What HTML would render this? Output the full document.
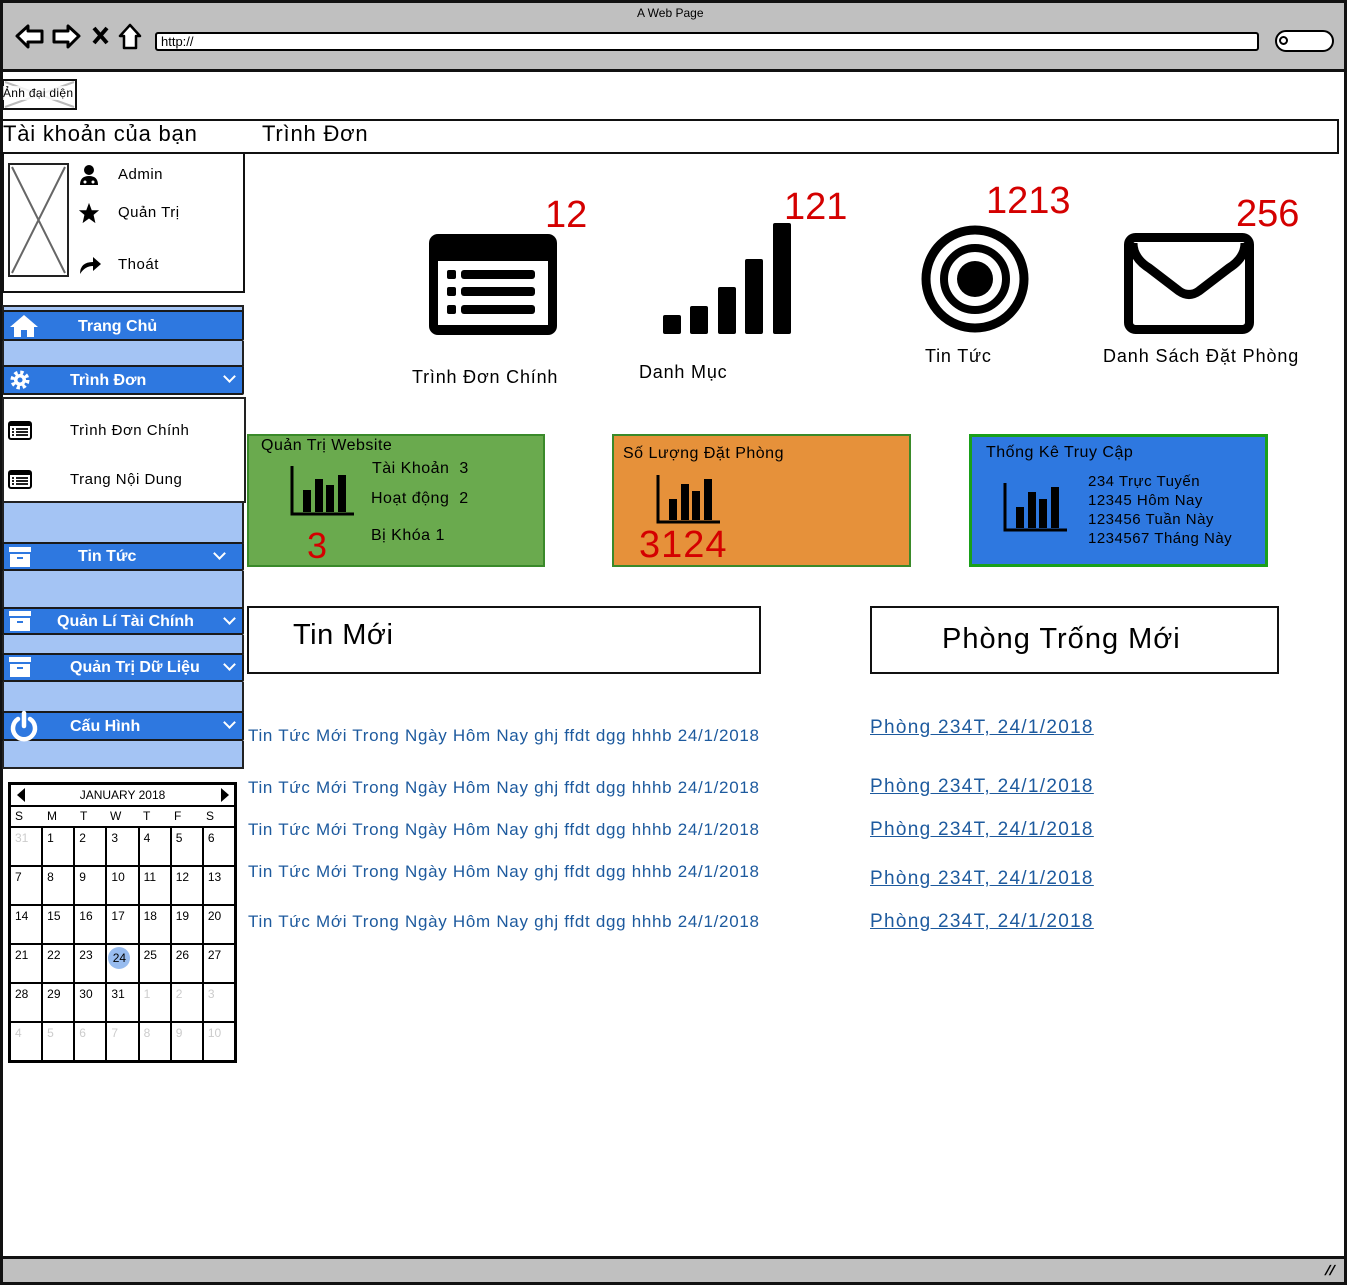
<!DOCTYPE html>
<html><head><meta charset="utf-8">
<style>
*{margin:0;padding:0;box-sizing:border-box}
body{width:1347px;height:1285px;position:relative;background:#fff;font-family:"Liberation Sans","DejaVu Sans",sans-serif;overflow:hidden;color:#000;letter-spacing:0.5px}
.a{position:absolute}
.bar{position:absolute;left:2px;width:242px;background:#2e78e0;border:2px solid #1a1a1a;border-radius:2px;color:#fff;font-weight:bold;font-size:16px;letter-spacing:0}
.lt{position:absolute;left:2px;width:242px;background:#a4c4f4;border-left:2px solid #222;border-right:2px solid #222}
.chev{position:absolute;right:8px;top:5px;width:9px;height:9px;border-right:2px solid #fff;border-bottom:2px solid #fff;transform:rotate(45deg)}
.red{color:#d40000;font-size:38px;letter-spacing:0}
.lk{position:absolute;left:248px;color:#1d5a9e;font-size:17px;letter-spacing:0.7px}
.rk{position:absolute;left:870px;color:#1d5a9e;font-size:19px;text-decoration:underline;letter-spacing:1.3px}
table.cal{border-collapse:collapse}
.cal td{border:2px solid #000;width:31px;height:39px;vertical-align:top;font-size:12px;padding:3px 0 0 4px;letter-spacing:0}
.g{color:#ccc}
</style></head><body>
<div class="a" style="left:0;top:0;width:1347px;height:1285px;border:3px solid #111;"></div>
<div class="a" style="left:3px;top:3px;width:1341px;height:69px;background:#c0c0c0;border-bottom:3px solid #111"></div>
<div class="a" style="left:637px;top:6px;font-size:12px;letter-spacing:0">A Web Page</div>
<svg class="a" style="left:14px;top:22px" width="135" height="30" viewBox="0 0 135 30">
<path d="M3 14 L14 4 L14 9 L28 9 L28 20 L14 20 L14 25 Z" fill="#fff" stroke="#000" stroke-width="3" stroke-linejoin="round"/>
<path d="M65 14 L54 4 L54 9 L40 9 L40 20 L54 20 L54 25 Z" fill="#fff" stroke="#000" stroke-width="3" stroke-linejoin="round"/>
<path d="M80 6 L93 21 M93 6 L80 21" stroke="#000" stroke-width="4"/>
<path d="M116 3 L106 14 L110 14 L110 26 L122 26 L122 14 L126 14 Z" fill="#fff" stroke="#000" stroke-width="2.5" stroke-linejoin="round"/>
</svg>
<div class="a" style="left:155px;top:32px;width:1104px;height:19px;background:#fff;border:2px solid #000;border-radius:3px;font-size:13px;padding-left:4px;line-height:15px;letter-spacing:0">http://</div>
<div class="a" style="left:1275px;top:30px;width:59px;height:22px;background:#fff;border:2px solid #000;border-radius:12px"></div>
<div class="a" style="left:1279px;top:36px;width:9px;height:9px;border:2px solid #000;border-radius:50%"></div>
<div class="a" style="left:3px;top:1256px;width:1341px;height:26px;background:#c0c0c0;border-top:3px solid #111"></div>
<div class="a" style="left:1326px;top:1262px;font-size:14px;font-weight:bold;transform:skewX(-20deg)">//</div>

<div class="a" style="left:2px;top:79px;width:75px;height:31px;border:2px solid #111;background:#fff"></div>
<svg class="a" style="left:3px;top:80px" width="73" height="29"><path d="M2 2 L71 27 M71 2 L2 27" stroke="#bbb" stroke-width="2"/></svg>
<div class="a" style="left:3px;top:86px;font-size:12px;letter-spacing:0.3px;background:rgba(255,255,255,.8)">Ảnh đại diện</div>

<div class="a" style="left:0;top:119px;width:1339px;height:35px;border:2px solid #111"></div>
<div class="a" style="left:3px;top:121px;font-size:22px;letter-spacing:0.8px">Tài khoản của bạn</div>
<div class="a" style="left:262px;top:121px;font-size:22px;letter-spacing:0.8px">Trình Đơn</div>

<div class="a" style="left:2px;top:153px;width:243px;height:140px;border:2px solid #111;border-top:none"></div>
<div class="a" style="left:8px;top:163px;width:61px;height:114px;border:2px solid #222"></div>
<svg class="a" style="left:10px;top:165px" width="57" height="110"><path d="M2 2 L55 108 M55 2 L2 108" stroke="#666" stroke-width="2"/></svg>
<svg class="a" style="left:78px;top:164px" width="22" height="22" viewBox="0 0 22 22"><circle cx="11" cy="6" r="5"/><path d="M2 21 Q2 12 11 12 Q20 12 20 21 Z"/><circle cx="7" cy="18" r="1.5" fill="#fff"/><circle cx="15" cy="18" r="1.5" fill="#fff"/></svg>
<div class="a" style="left:118px;top:166px;font-size:15px">Admin</div>
<svg class="a" style="left:78px;top:202px" width="22" height="22" viewBox="0 0 24 24"><path d="M12 1 L15 9 L23 9 L17 14 L19 23 L12 18 L5 23 L7 14 L1 9 L9 9 Z"/></svg>
<div class="a" style="left:118px;top:204px;font-size:15px">Quản Trị</div>
<svg class="a" style="left:77px;top:253px" width="26" height="22" viewBox="0 0 26 22"><path d="M3 21 Q3 9 16 9 L16 4 L24 11 L16 18 L16 13 Q8 13 3 21 Z"/></svg>
<div class="a" style="left:118px;top:256px;font-size:15px">Thoát</div>

<div class="lt" style="top:305px;height:8px;border-top:2px solid #222"></div>
<div class="bar" style="top:310px;height:31px"><span class="a" style="left:74px;top:6px">Trang Chủ</span></div>
<svg class="a" style="left:8px;top:313px" width="32" height="25" viewBox="0 0 32 25"><path d="M16 2 L2 14 L6 14 L6 24 L13 24 L13 17 L19 17 L19 24 L26 24 L26 14 L30 14 Z" fill="#fff"/></svg>
<div class="lt" style="top:341px;height:25px"></div>
<div class="bar" style="top:365px;height:30px"><span class="a" style="left:66px;top:5px">Trình Đơn</span><span class="chev"></span></div>
<svg class="a" style="left:9px;top:369px" width="22" height="22" viewBox="0 0 22 22"><circle cx="11" cy="11" r="7" fill="none" stroke="#fff" stroke-width="5" stroke-dasharray="3 2.5"/><circle cx="11" cy="11" r="6" fill="#fff"/><circle cx="11" cy="11" r="2.5" fill="#2e78e0"/></svg>
<div class="a" style="left:2px;top:397px;width:244px;height:106px;border:2px solid #222;background:#fff"></div>
<svg class="a" style="left:8px;top:421px" width="24" height="19" viewBox="0 0 24 19"><rect x="1" y="1" width="22" height="17" rx="2" fill="#fff" stroke="#000" stroke-width="2"/><rect x="1" y="1" width="22" height="4" fill="#000"/><path d="M4 8h2M4 11h2M4 14h2M8 8h12M8 11h12M8 14h12" stroke="#000" stroke-width="1.7"/></svg>
<div class="a" style="left:70px;top:422px;font-size:15px">Trình Đơn Chính</div>
<svg class="a" style="left:8px;top:470px" width="24" height="19" viewBox="0 0 24 19"><rect x="1" y="1" width="22" height="17" rx="2" fill="#fff" stroke="#000" stroke-width="2"/><rect x="1" y="1" width="22" height="4" fill="#000"/><path d="M4 8h2M4 11h2M4 14h2M8 8h12M8 11h12M8 14h12" stroke="#000" stroke-width="1.7"/></svg>
<div class="a" style="left:70px;top:471px;font-size:15px">Trang Nội Dung</div>
<div class="lt" style="top:503px;height:40px"></div>
<div class="bar" style="top:542px;height:29px"><span class="a" style="left:74px;top:4px">Tin Tức</span><span class="chev" style="right:18px"></span></div>
<div class="lt" style="top:571px;height:37px"></div>
<div class="bar" style="top:607px;height:28px"><span class="a" style="left:53px;top:4px">Quản Lí Tài Chính</span><span class="chev"></span></div>
<div class="lt" style="top:635px;height:19px"></div>
<div class="bar" style="top:653px;height:29px"><span class="a" style="left:66px;top:4px">Quản Trị Dữ Liệu</span><span class="chev"></span></div>
<div class="lt" style="top:682px;height:30px"></div>
<div class="bar" style="top:711px;height:30px"><span class="a" style="left:66px;top:5px">Cấu Hình</span><span class="chev"></span></div>
<div class="lt" style="top:741px;height:28px;border-bottom:2px solid #222"></div>
<svg class="a" style="left:8px;top:546px" width="24" height="22"><rect x="1" y="1" width="22" height="5" fill="#fff"/><rect x="2" y="8" width="20" height="13" fill="#fff"/><rect x="9" y="11" width="6" height="2" fill="#2e78e0"/></svg>
<svg class="a" style="left:8px;top:610px" width="24" height="22"><rect x="1" y="1" width="22" height="5" fill="#fff"/><rect x="2" y="8" width="20" height="13" fill="#fff"/><rect x="9" y="11" width="6" height="2" fill="#2e78e0"/></svg>
<svg class="a" style="left:8px;top:656px" width="24" height="22"><rect x="1" y="1" width="22" height="5" fill="#fff"/><rect x="2" y="8" width="20" height="13" fill="#fff"/><rect x="9" y="11" width="6" height="2" fill="#2e78e0"/></svg>
<svg class="a" style="left:9px;top:710px" width="30" height="32" viewBox="0 0 30 32"><path d="M9 9 A11 11 0 1 0 21 9" fill="none" stroke="#fff" stroke-width="4.5" stroke-linecap="round"/><path d="M15 3 L15 16" stroke="#fff" stroke-width="4.5" stroke-linecap="round"/></svg>

<div class="a" style="left:8px;top:782px;width:229px;height:281px;border:3px solid #000;background:#fff"></div>
<div class="a" style="left:11px;top:785px;width:223px;height:22px;border-bottom:2px solid #000;font-size:12px;text-align:center;line-height:20px;letter-spacing:0">JANUARY 2018</div>
<div class="a" style="left:17px;top:788px;width:0;height:0;border-top:7px solid transparent;border-bottom:7px solid transparent;border-right:8px solid #000"></div>
<div class="a" style="left:221px;top:788px;width:0;height:0;border-top:7px solid transparent;border-bottom:7px solid transparent;border-left:8px solid #000"></div>
<div class="a" style="left:11px;top:809px;width:223px;height:18px;font-size:12px;display:flex;letter-spacing:0"><span style="width:31px;padding-left:4px">S</span><span style="width:31px;padding-left:5px">M</span><span style="width:31px;padding-left:7px">T</span><span style="width:31px;padding-left:6px">W</span><span style="width:31px;padding-left:8px">T</span><span style="width:31px;padding-left:8px">F</span><span style="width:31px;padding-left:9px">S</span></div>
<table class="cal a" style="left:9px;top:826px;width:227px">
<tr><td class="g">31</td><td>1</td><td>2</td><td>3</td><td>4</td><td>5</td><td>6</td></tr>
<tr><td>7</td><td>8</td><td>9</td><td>10</td><td>11</td><td>12</td><td>13</td></tr>
<tr><td>14</td><td>15</td><td>16</td><td>17</td><td>18</td><td>19</td><td>20</td></tr>
<tr><td>21</td><td>22</td><td>23</td><td style="padding:2px 0 0 1px"><span style="display:inline-block;width:22px;height:22px;border-radius:50%;background:#98bcef;text-align:center;line-height:22px">24</span></td><td>25</td><td>26</td><td>27</td></tr>
<tr><td>28</td><td>29</td><td>30</td><td>31</td><td class="g">1</td><td class="g">2</td><td class="g">3</td></tr>
<tr><td class="g">4</td><td class="g">5</td><td class="g">6</td><td class="g">7</td><td class="g">8</td><td class="g">9</td><td class="g">10</td></tr>
</table>

<svg class="a" style="left:429px;top:234px" width="128" height="101" viewBox="0 0 128 101"><rect x="0" y="0" width="128" height="101" rx="9"/><rect x="9" y="27" width="110" height="64" fill="#fff"/><rect x="18" y="36" width="9" height="9" rx="2"/><rect x="18" y="53" width="9" height="9" rx="2"/><rect x="18" y="71" width="9" height="9" rx="2"/><rect x="32" y="36" width="74" height="9" rx="3"/><rect x="32" y="53" width="74" height="9" rx="3"/><rect x="32" y="71" width="74" height="9" rx="3"/></svg>
<div class="a red" style="left:545px;top:194px">12</div>
<div class="a" style="left:412px;top:367px;font-size:18px;letter-spacing:0.8px">Trình Đơn Chính</div>
<svg class="a" style="left:663px;top:223px" width="129" height="111"><rect x="0" y="92" width="18" height="19" rx="2"/><rect x="27" y="83" width="18" height="28" rx="2"/><rect x="55" y="64" width="18" height="47" rx="2"/><rect x="82" y="36" width="18" height="75" rx="2"/><rect x="110" y="0" width="18" height="111" rx="2"/></svg>
<div class="a red" style="left:784px;top:186px">121</div>
<div class="a" style="left:639px;top:362px;font-size:18px;letter-spacing:0.8px">Danh Mục</div>
<svg class="a" style="left:920px;top:224px" width="110" height="110"><circle cx="55" cy="55" r="49" fill="none" stroke="#000" stroke-width="9"/><circle cx="55" cy="55" r="31" fill="none" stroke="#000" stroke-width="8"/><circle cx="55" cy="55" r="18"/></svg>
<div class="a red" style="left:986px;top:180px">1213</div>
<div class="a" style="left:925px;top:346px;font-size:18px;letter-spacing:0.8px">Tin Tức</div>
<svg class="a" style="left:1124px;top:233px" width="130" height="101" viewBox="0 0 130 101"><rect x="4.5" y="4.5" width="121" height="92" rx="7" fill="none" stroke="#000" stroke-width="9"/><path d="M9 10 Q9 25 25 35 L55 58 Q65 65 75 58 L105 35 Q121 25 121 10" fill="none" stroke="#000" stroke-width="9"/></svg>
<div class="a red" style="left:1236px;top:193px">256</div>
<div class="a" style="left:1103px;top:346px;font-size:18px;letter-spacing:0.9px">Danh Sách Đặt Phòng</div>

<div class="a" style="left:247px;top:434px;width:298px;height:133px;background:#6aaa4e;border:2px solid #3a8a2a"></div>
<div class="a" style="left:261px;top:437px;font-size:16px">Quản Trị Website</div>
<svg class="a" style="left:290px;top:466px" width="66" height="50"><path d="M2 0 L2 48 L64 48" fill="none" stroke="#000" stroke-width="3"/><rect x="13" y="24" width="8" height="22"/><rect x="25" y="13" width="8" height="33"/><rect x="36" y="19" width="8" height="27"/><rect x="48" y="9" width="8" height="37"/></svg>
<div class="a" style="left:372px;top:460px;font-size:16px">Tài Khoản&nbsp; 3</div>
<div class="a" style="left:371px;top:490px;font-size:16px">Hoạt động&nbsp; 2</div>
<div class="a" style="left:371px;top:527px;font-size:16px">Bị Khóa 1</div>
<div class="a" style="left:307px;top:525px;color:#d40000;font-size:36px">3</div>

<div class="a" style="left:612px;top:434px;width:299px;height:133px;background:#e6913a;border:2px solid #3a8a2a"></div>
<div class="a" style="left:623px;top:445px;font-size:16px">Số Lượng Đặt Phòng</div>
<svg class="a" style="left:656px;top:475px" width="66" height="50"><path d="M2 0 L2 47 L64 47" fill="none" stroke="#000" stroke-width="3"/><rect x="13" y="24" width="8" height="21"/><rect x="25" y="9" width="8" height="36"/><rect x="36" y="16" width="8" height="29"/><rect x="48" y="4" width="8" height="41"/></svg>
<div class="a" style="left:639px;top:524px;color:#d40000;font-size:38px;letter-spacing:1px">3124</div>

<div class="a" style="left:969px;top:434px;width:299px;height:133px;background:#2e78e0;border:3px solid #1aa01a"></div>
<div class="a" style="left:986px;top:444px;font-size:16px">Thống Kê Truy Cập</div>
<svg class="a" style="left:1003px;top:483px" width="66" height="50"><path d="M2 0 L2 47 L64 47" fill="none" stroke="#000" stroke-width="3"/><rect x="13" y="24" width="8" height="21"/><rect x="25" y="9" width="8" height="36"/><rect x="36" y="16" width="8" height="29"/><rect x="48" y="4" width="8" height="41"/></svg>
<div class="a" style="left:1088px;top:472px;font-size:15px;line-height:19px">234 Trực Tuyến<br>12345 Hôm Nay<br>123456 Tuần Này<br>1234567 Tháng Này</div>

<div class="a" style="left:247px;top:606px;width:514px;height:68px;border:2px solid #111"></div>
<div class="a" style="left:293px;top:619px;font-size:29px">Tin Mới</div>
<div class="a" style="left:870px;top:606px;width:409px;height:68px;border:2px solid #111"></div>
<div class="a" style="left:942px;top:623px;font-size:29px;letter-spacing:1px">Phòng Trống Mới</div>

<div class="lk" style="top:726px">Tin Tức Mới Trong Ngày Hôm Nay ghj ffdt dgg hhhb 24/1/2018</div>
<div class="lk" style="top:778px">Tin Tức Mới Trong Ngày Hôm Nay ghj ffdt dgg hhhb 24/1/2018</div>
<div class="lk" style="top:820px">Tin Tức Mới Trong Ngày Hôm Nay ghj ffdt dgg hhhb 24/1/2018</div>
<div class="lk" style="top:862px">Tin Tức Mới Trong Ngày Hôm Nay ghj ffdt dgg hhhb 24/1/2018</div>
<div class="lk" style="top:912px">Tin Tức Mới Trong Ngày Hôm Nay ghj ffdt dgg hhhb 24/1/2018</div>
<div class="rk" style="top:717px">Phòng 234T, 24/1/2018</div>
<div class="rk" style="top:776px">Phòng 234T, 24/1/2018</div>
<div class="rk" style="top:819px">Phòng 234T, 24/1/2018</div>
<div class="rk" style="top:868px">Phòng 234T, 24/1/2018</div>
<div class="rk" style="top:911px">Phòng 234T, 24/1/2018</div>
</body></html>
